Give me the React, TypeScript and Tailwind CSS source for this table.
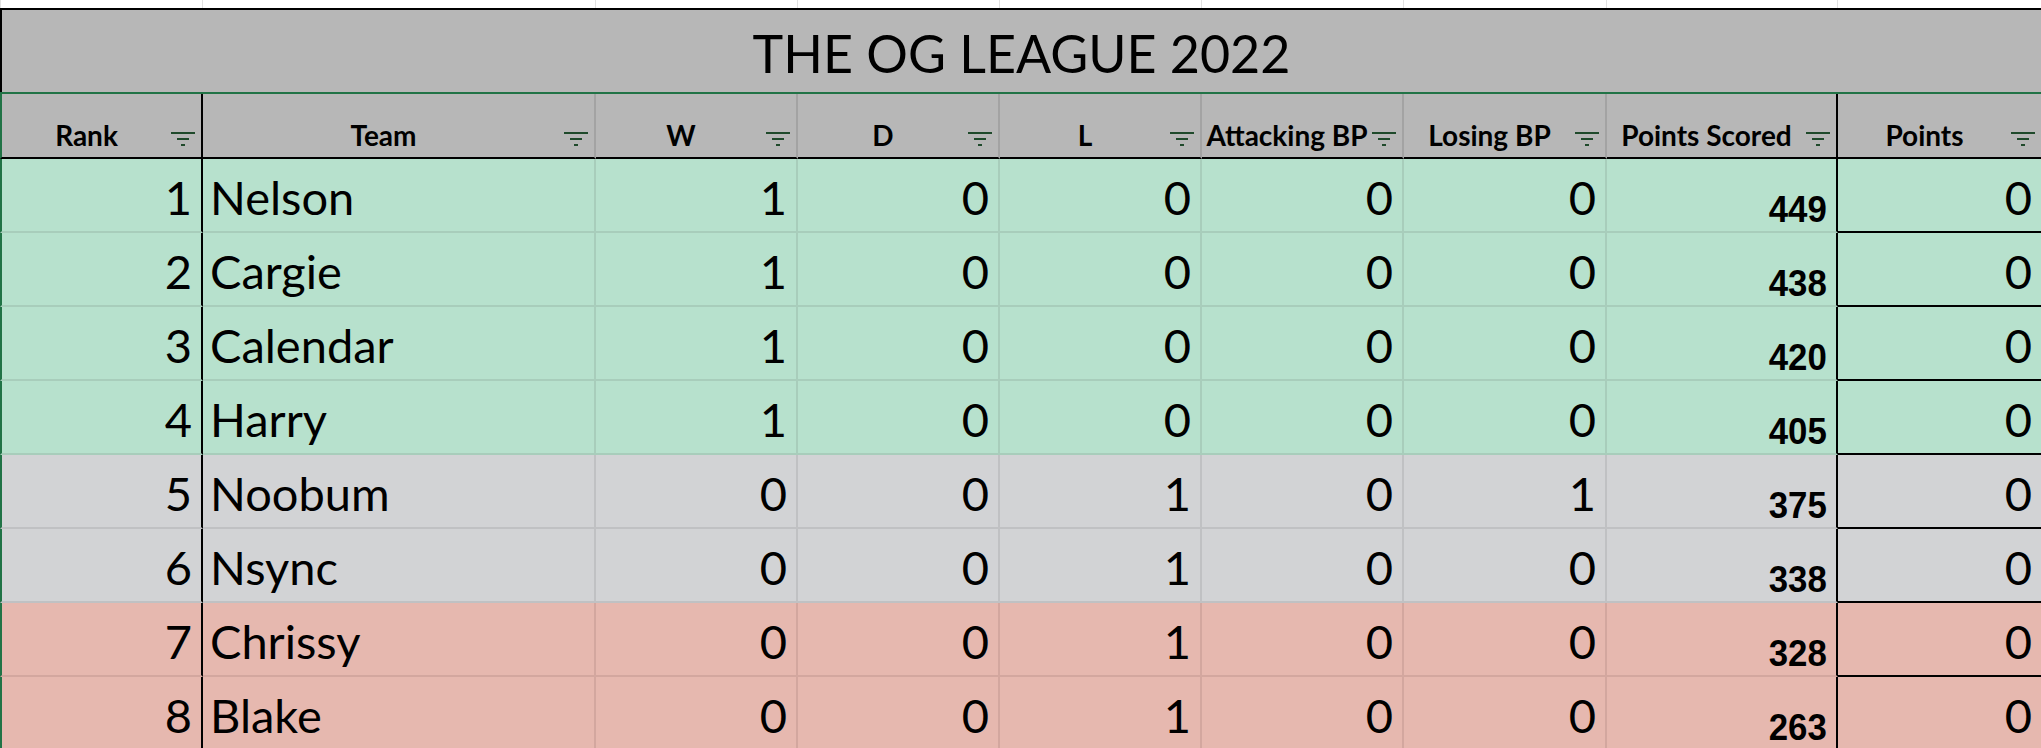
import React from 'react';

type Tone = 'g' | 's' | 'r';

const rows: { rank: number; team: string; w: number; d: number; l: number; a: number; lb: number; ps: number; p: number; tone: Tone }[] = [
  { rank: 1, team: 'Nelson', w: 1, d: 0, l: 0, a: 0, lb: 0, ps: 449, p: 0, tone: 'g' },
  { rank: 2, team: 'Cargie', w: 1, d: 0, l: 0, a: 0, lb: 0, ps: 438, p: 0, tone: 'g' },
  { rank: 3, team: 'Calendar', w: 1, d: 0, l: 0, a: 0, lb: 0, ps: 420, p: 0, tone: 'g' },
  { rank: 4, team: 'Harry', w: 1, d: 0, l: 0, a: 0, lb: 0, ps: 405, p: 0, tone: 'g' },
  { rank: 5, team: 'Noobum', w: 0, d: 0, l: 1, a: 0, lb: 1, ps: 375, p: 0, tone: 's' },
  { rank: 6, team: 'Nsync', w: 0, d: 0, l: 1, a: 0, lb: 0, ps: 338, p: 0, tone: 's' },
  { rank: 7, team: 'Chrissy', w: 0, d: 0, l: 1, a: 0, lb: 0, ps: 328, p: 0, tone: 'r' },
  { rank: 8, team: 'Blake', w: 0, d: 0, l: 1, a: 0, lb: 0, ps: 263, p: 0, tone: 'r' },
];

const toneBg: Record<Tone, string> = {
  g: 'bg-[#b7e1cd]',
  s: 'bg-[#d2d3d5]',
  r: 'bg-[#e6b8af]',
};

const toneLine: Record<Tone, string> = {
  g: 'border-[#a8cdbb]',
  s: 'border-[#c0c1c3]',
  r: 'border-[#d3a79f]',
};

const COLS = 'grid grid-cols-[203px_393px_202px_202px_202px_202px_203px_231px_203px]';

function FilterIcon() {
  return (
    <svg width="24" height="14" viewBox="0 0 24 14" className="mb-[3px] mr-[6px] shrink-0">
      <rect x="0" y="0" width="24" height="2" fill="#1f4a2b" />
      <rect x="6" y="6" width="12" height="2" fill="#1f4a2b" />
      <rect x="10" y="12" width="4" height="2" fill="#1f4a2b" />
    </svg>
  );
}

const headers = ['Rank', 'Team', 'W', 'D', 'L', 'Attacking BP', 'Losing BP', 'Points Scored', 'Points'];

export default function App() {
  return (
    <div className="w-[2041px] h-[748px] overflow-hidden bg-white font-['Lato',sans-serif] text-black">
      {/* top strip with sheet gridlines */}
      <div className={`${COLS} h-[8px]`}>
        {headers.map((h, i) => (
          <div key={h} className={`h-full ${i < 8 ? 'border-r border-[#e1e1e1]' : ''} ${i === 0 ? 'border-l border-[#e1e1e1]' : ''}`} />
        ))}
      </div>

      {/* title */}
      <div className="h-[84px] border-t-2 border-l-2 border-black bg-[#b7b7b7] flex items-center justify-center">
        <span className="text-[52px] leading-none pt-[3px]">THE OG LEAGUE 2022</span>
      </div>

      {/* header row */}
      <div className={`${COLS} h-[67px] border-t-2 border-[#217346] bg-[#b7b7b7]`}>
        {headers.map((h, i) => {
          const right =
            i === 0 || i === 7
              ? 'border-r-2 border-r-black'
              : i === 8
              ? ''
              : 'border-r-2 border-r-[#a3a3a3]';
          const left = i === 0 ? 'border-l-2 border-l-[#217346]' : '';
          return (
            <div key={h} className={`flex items-end pb-[8px] border-b-2 border-b-black ${right} ${left}`}>
              <span className="flex-1 min-w-0 text-center whitespace-nowrap text-[28px] font-bold leading-none">{h}</span>
              <FilterIcon />
            </div>
          );
        })}
      </div>

      {/* body rows */}
      {rows.map((r) => {
        const bg = toneBg[r.tone];
        const line = toneLine[r.tone];
        const num = `flex items-end justify-end pr-[9px] pb-[10px] border-b-2 border-r-2 ${line} text-[47px] leading-none`;
        return (
          <div key={r.rank} className={`${COLS} h-[74px] ${bg}`}>
            <div className={`flex items-end justify-end pr-[9px] pb-[10px] border-b-2 ${line} border-l-2 border-l-[#217346] border-r-2 border-r-black text-[47px] leading-none`}>
              {r.rank}
            </div>
            <div className={`flex items-end justify-start pl-[7px] pb-[10px] border-b-2 border-r-2 ${line} text-[47px] leading-none`}>
              {r.team}
            </div>
            <div className={num}>{r.w}</div>
            <div className={num}>{r.d}</div>
            <div className={num}>{r.l}</div>
            <div className={num}>{r.a}</div>
            <div className={num}>{r.lb}</div>
            <div className={`flex items-end justify-end pr-[9px] pb-[3px] border-b-2 ${line} border-r-2 border-r-black`}>
              <span className="inline-block origin-right scale-x-[0.94] font-['Liberation_Sans',Arial,sans-serif] font-bold text-[37px] leading-none">
                {r.ps}
              </span>
            </div>
            <div className="flex items-end justify-end pr-[9px] pb-[10px] border-b-2 border-black text-[47px] leading-none">
              {r.p}
            </div>
          </div>
        );
      })}
    </div>
  );
}
